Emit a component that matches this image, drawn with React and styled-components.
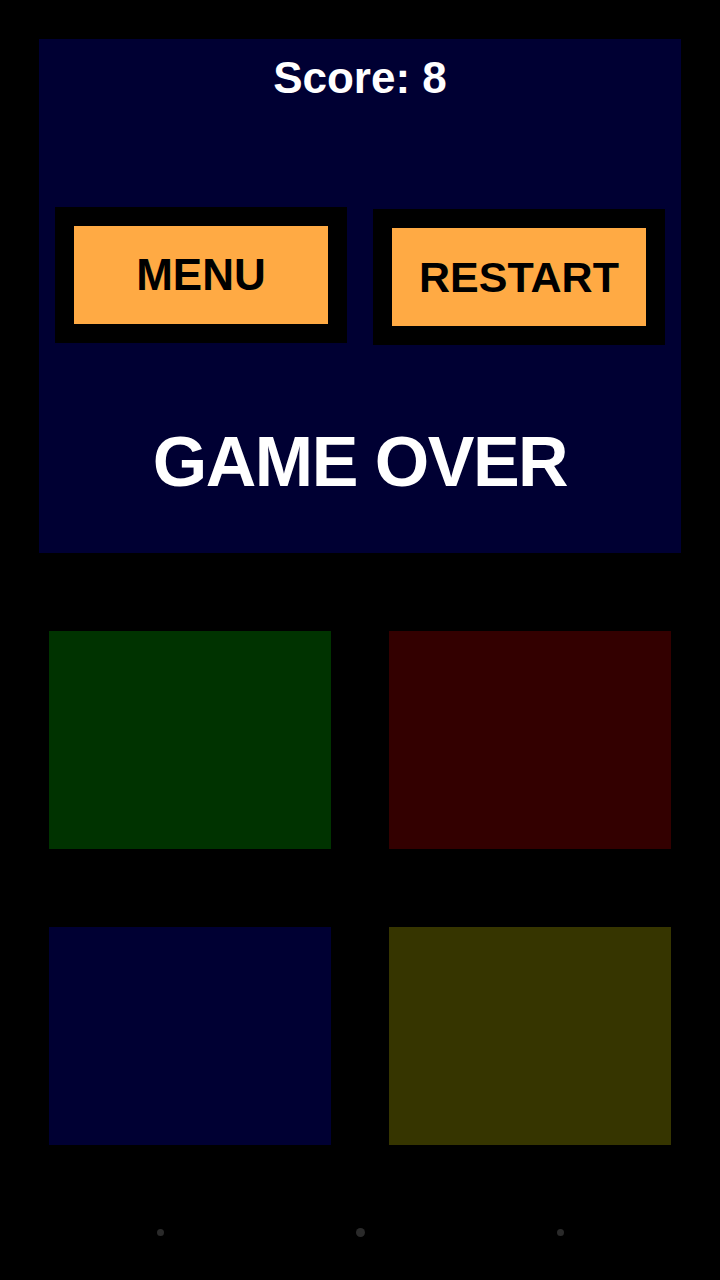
import styled, { createGlobalStyle } from "styled-components";

const GlobalStyle = createGlobalStyle`
  html, body {
    margin: 0;
    padding: 0;
    background: #000;
  }
  body {
    font-family: "Liberation Sans", Arial, sans-serif;
  }
`;

const Screen = styled.div`
  width: 720px;
  height: 1280px;
  background: #000;
  box-sizing: border-box;
  padding-top: 39px;
  display: flex;
  flex-direction: column;
`;

const Panel = styled.section`
  margin: 0 39px;
  height: 514px;
  background: #000033;
  box-sizing: border-box;
  padding: 17px 16px 0 16px;
  display: flex;
  flex-direction: column;
  align-items: stretch;
`;

const Score = styled.h2`
  margin: 0;
  font-size: 44px;
  line-height: 1;
  font-weight: 700;
  color: #fff;
  text-align: center;
`;

const ButtonRow = styled.div`
  margin-top: 107px;
  display: grid;
  grid-template-columns: 1fr 1fr;
  column-gap: 26px;
  align-items: start;
`;

const ButtonFrame = styled.div`
  background: #000;
  padding: 19px;
  margin-top: ${({ $drop }) => $drop || 0}px;
`;

const Button = styled.button`
  display: flex;
  align-items: center;
  justify-content: center;
  width: 100%;
  height: 98px;
  border: none;
  background: #ffaa44;
  color: #000;
  font-family: "Liberation Sans", Arial, sans-serif;
  font-weight: 700;
  font-size: ${({ $size }) => $size}px;
  line-height: 1;
  cursor: pointer;
  padding: 0;
`;

const GameOver = styled.h1`
  margin: 82px 0 0 0;
  font-size: 70px;
  line-height: 1;
  letter-spacing: -1.5px;
  font-weight: 700;
  color: #fff;
  text-align: center;
`;

const Pads = styled.div`
  margin-top: 78px;
  padding: 0 49px;
  display: grid;
  grid-template-columns: 282px 282px;
  grid-auto-rows: 218px;
  column-gap: 58px;
  row-gap: 78px;
`;

const Pad = styled.div`
  background: ${({ $color }) => $color};
`;

const Dots = styled.div`
  margin-top: 83px;
  display: flex;
  justify-content: center;
  align-items: center;
  gap: 192px;
`;

const Dot = styled.span`
  width: ${({ $big }) => ($big ? 9 : 7)}px;
  height: ${({ $big }) => ($big ? 9 : 7)}px;
  border-radius: 50%;
  background: #2a2a2a;
`;

const pads = ["#003300", "#330000", "#000033", "#363500"];

const App = () => {
  return (
    <>
      <GlobalStyle />
      <Screen>
        <Panel>
          <Score>Score: 8</Score>
          <ButtonRow>
            <ButtonFrame>
              <Button $size={44}>MENU</Button>
            </ButtonFrame>
            <ButtonFrame $drop={2}>
              <Button $size={43}>RESTART</Button>
            </ButtonFrame>
          </ButtonRow>
          <GameOver>GAME OVER</GameOver>
        </Panel>

        <Pads>
          {pads.map((c) => (
            <Pad key={c} $color={c} />
          ))}
        </Pads>

        <Dots>
          <Dot />
          <Dot $big />
          <Dot />
        </Dots>
      </Screen>
    </>
  );
};

export default App;
